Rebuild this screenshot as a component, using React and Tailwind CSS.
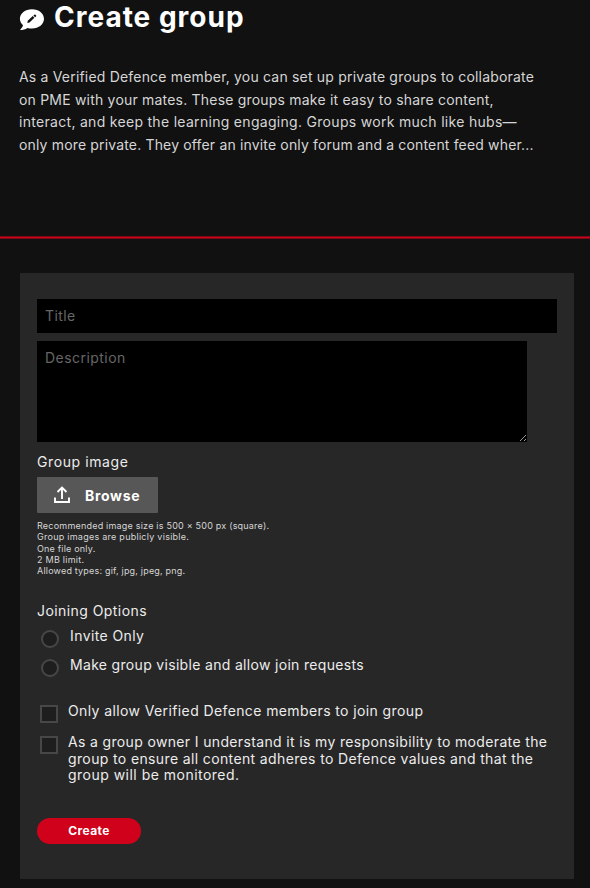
import React from "react";

const intro = [
  { text: "As a Verified Defence member, you can set up private groups to collaborate", cls: "tracking-[0.19px]" },
  { text: "on PME with your mates. These groups make it easy to share content,", cls: "tracking-[0.2px]" },
  { text: "interact, and keep the learning engaging. Groups work much like hubs—", cls: "tracking-[0.3px]" },
  { text: "only more private. They offer an invite only forum and a content feed wher...", cls: "tracking-[0.16px]" },
];

const imageHints = [
  { text: "Recommended image size is 500 × 500 px (square).", cls: "tracking-[0.21px]" },
  { text: "Group images are publicly visible.", cls: "tracking-[0.26px]" },
  { text: "One file only.", cls: "tracking-[0.2px]" },
  { text: "2 MB limit.", cls: "tracking-[0.25px]" },
  { text: "Allowed types: gif, jpg, jpeg, png.", cls: "tracking-[0.19px]" },
];

const ownerTerms = [
  { text: "As a group owner I understand it is my responsibility to moderate the", cls: "tracking-[0.35px]" },
  { text: "group to ensure all content adheres to Defence values and that the", cls: "tracking-[0.37px]" },
  { text: "group will be monitored.", cls: "tracking-[0.48px]" },
];

function Lines({ items }) {
  return items.map((line) => (
    <span key={line.text} className={`block whitespace-nowrap ${line.cls}`}>
      {line.text}
    </span>
  ));
}

function GroupIcon() {
  return (
    <svg width="26" height="22" viewBox="0 0 26 22" className="mt-[9px] shrink-0">
      <path
        d="M13 .2C6.2.2.9 4.400.9 9.800c0 2.500 1.200 4.700 3.100 6.400-.3 1.500-1.500 3.200-3 4.800 3 0 5.600-.8 7.400-2.100 1.400.4 3 .6 4.600.6 6.800 0 12-4.300 12-9.700S19.800.2 13 .2z"
        fill="#fff"
      />
      <path d="M8.300 13.900l.5-2.200 4.900-4.600 1.700 1.700-4.900 4.600z" fill="#111" />
      <path d="M14.400 6.500l.9-.8q.6-.5 1.100 0l.6.600q.5.600 0 1.100l-.9.8z" fill="#111" />
    </svg>
  );
}

function UploadIcon() {
  return (
    <svg width="16" height="18" viewBox="0 0 16 18" fill="none" stroke="#fff" strokeWidth="1.9">
      <path d="M8 13V2M3.500 6L8 1.500 12.500 6M1 11.500V16h14v-4.500" />
    </svg>
  );
}

export default function App() {
  return (
    <div className="h-[888px] w-[590px] overflow-hidden bg-[#111111] font-['Inter',sans-serif] text-white">
      {/* Header */}
      <header className="h-[236px] pl-[19px]">
        <div className="flex gap-[9px]">
          <GroupIcon />
          <h1 className="whitespace-nowrap text-[28px] font-bold leading-[35px] tracking-[1px]">Create group</h1>
        </div>
        <p className="mt-[31px] text-[14px] leading-[22.5px] text-[#d6d6d6]">
          <Lines items={intro} />
        </p>
      </header>
      <div className="h-[3px] border-y border-[#780a16] bg-[#d0021b]" />

      {/* Form */}
      <form className="ml-5 mt-[34px] h-[606px] w-[554px] bg-[#272727] pl-[17px] pt-[26px]">
        <input
          placeholder="Title"
          className="block h-[34px] w-[520px] bg-black px-2 pb-[2px] text-[14px] tracking-[0.4px] outline-none placeholder:text-[#666]"
        />
        <textarea
          placeholder="Description"
          className="mt-[8px] block h-[101px] w-[490px] bg-black px-2 py-[7px] text-[14px] leading-5 tracking-[0.45px] outline-none placeholder:text-[#666]"
        />

        <div className="mt-[10px] text-[14px] leading-5 text-[#ececec]">
          <span className="tracking-[0.6px]">Group image</span>
        </div>
        <button
          type="button"
          className="mt-[5px] flex h-[36px] w-[121px] items-center rounded-[1px] bg-[#575757] pl-[17px] text-[14px] font-bold tracking-[0.7px]"
        >
          <UploadIcon />
          <span className="ml-[15px]">Browse</span>
        </button>
        <div className="mt-[7px] text-[9px] leading-[11.3px] text-[#d6d6d6]">
          <Lines items={imageHints} />
        </div>

        <div className="mt-[25px] text-[14px] leading-5 text-[#ececec]">
          <span className="tracking-[0.43px]">Joining Options</span>
        </div>
        <label className="mt-[5px] flex h-[29px] text-[14px] leading-5 text-[#ececec]">
          <span className="ml-1 mr-[11px] mt-[4px] size-[18px] rounded-full border-2 border-[#474747] bg-[#1e1e1e]" />
          <span className="tracking-[0.4px]">Invite Only</span>
        </label>
        <label className="flex h-[46px] text-[14px] leading-5 text-[#ececec]">
          <span className="ml-1 mr-[11px] mt-[4px] size-[18px] rounded-full border-2 border-[#474747] bg-[#1e1e1e]" />
          <span className="tracking-[0.32px]">Make group visible and allow join requests</span>
        </label>
        <label className="flex h-[33px] text-[14px] leading-5 text-[#ececec]">
          <span className="mr-[10px] ml-[3px] mt-[4px] size-[18px] border-2 border-[#474747] bg-[#1e1e1e]" />
          <span className="tracking-[0.39px]">Only allow Verified Defence members to join group</span>
        </label>
        <label className="flex text-[14px] leading-[16.4px] text-[#ececec]">
          <span className="mr-[10px] ml-[3px] mt-[2px] size-[18px] border-2 border-[#474747] bg-[#1e1e1e]" />
          <span>
            <Lines items={ownerTerms} />
          </span>
        </label>

        <button
          type="button"
          className="mt-[34px] block h-[26px] w-[104px] rounded-[13px] bg-[#d0021b] text-[12px] font-bold tracking-[0.4px]"
        >
          Create
        </button>
      </form>
    </div>
  );
}
